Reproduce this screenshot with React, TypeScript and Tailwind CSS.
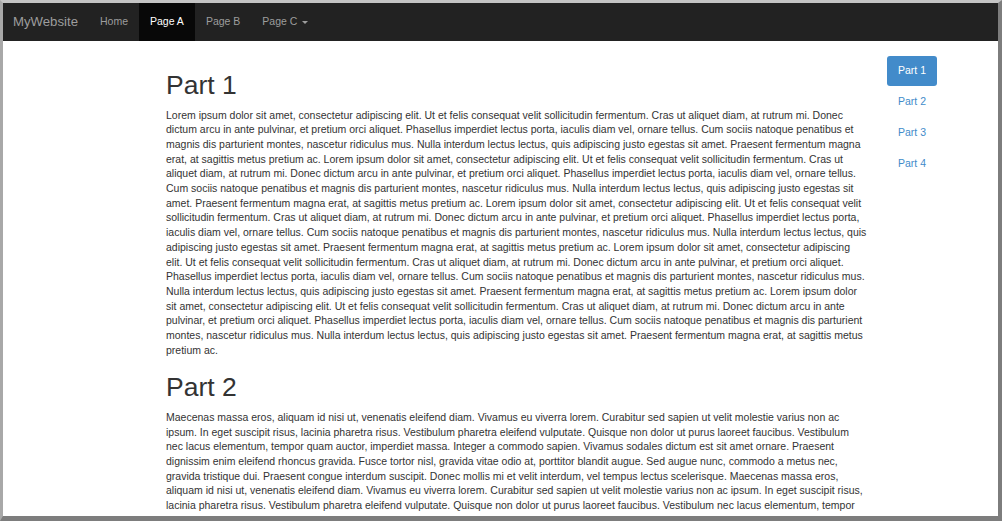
import React from "react";

const LOREM =
  "Lorem ipsum dolor sit amet, consectetur adipiscing elit. Ut et felis consequat velit sollicitudin fermentum. Cras ut aliquet diam, at rutrum mi. Donec dictum arcu in ante pulvinar, et pretium orci aliquet. Phasellus imperdiet lectus porta, iaculis diam vel, ornare tellus. Cum sociis natoque penatibus et magnis dis parturient montes, nascetur ridiculus mus. Nulla interdum lectus lectus, quis adipiscing justo egestas sit amet. Praesent fermentum magna erat, at sagittis metus pretium ac.";

const MAECENAS =
  "Maecenas massa eros, aliquam id nisi ut, venenatis eleifend diam. Vivamus eu viverra lorem. Curabitur sed sapien ut velit molestie varius non ac ipsum. In eget suscipit risus, lacinia pharetra risus. Vestibulum pharetra eleifend vulputate. Quisque non dolor ut purus laoreet faucibus. Vestibulum nec lacus elementum, tempor quam auctor, imperdiet massa. Integer a commodo sapien. Vivamus sodales dictum est sit amet ornare. Praesent dignissim enim eleifend rhoncus gravida. Fusce tortor nisl, gravida vitae odio at, porttitor blandit augue. Sed augue nunc, commodo a metus nec, gravida tristique dui. Praesent congue interdum suscipit. Donec mollis mi et velit interdum, vel tempus lectus scelerisque.";

const NAV = ["Home", "Page A", "Page B"];
const PARTS = ["Part 1", "Part 2", "Part 3", "Part 4"];

function Navbar() {
  return (
    <div className="h-[38px] shrink-0 bg-[#222222] flex items-stretch text-[10.5px]">
      <div className="pl-[10px] pr-[11px] flex items-center text-[13.2px] text-[#9d9d9d]">MyWebsite</div>
      {NAV.map((item) => (
        <div
          key={item}
          className={
            item === "Page A"
              ? "px-[11px] flex items-center bg-[#080808] text-white"
              : "px-[11px] flex items-center text-[#9d9d9d]"
          }
        >
          {item}
        </div>
      ))}
      <div className="px-[11px] flex items-center text-[#9d9d9d]">
        Page C
        <span className="ml-[5px] w-0 h-0 border-x-[3px] border-t-[3px] border-x-transparent border-t-[#9d9d9d]" />
      </div>
    </div>
  );
}

export default function App() {
  const part1 = Array(5).fill(LOREM).join(" ");
  const part2 = Array(3).fill(MAECENAS).join(" ");

  return (
    <div
      className="w-[1002px] h-[521px] overflow-hidden border-t-[3px] border-l-[3px] border-r-[4px] border-b-[5px] border-t-[#c4c4c4] border-l-[#a8a8a8] border-r-[#7d7d7d] border-b-[#7d7d7d] bg-white flex flex-col"
      style={{ fontFamily: '"Liberation Sans", Arial, sans-serif' }}
    >
      <Navbar />
      <div className="flex-1 overflow-hidden flex pl-[163px]">
        <div className="w-[702px] pt-[30px] text-[#333333]">
          <h1 className="text-[26.5px] leading-[29px] mb-[7.5px]">Part 1</h1>
          <p className="text-[10.5px] leading-[14.7px]">{part1}</p>
          <h1 className="text-[26.5px] leading-[29px] mt-[16px] mb-[7.5px]">Part 2</h1>
          <p className="text-[10.5px] leading-[14.7px]">{part2}</p>
        </div>
        <div className="ml-[19px] w-[50px] pt-[15px] flex flex-col gap-[1px] text-[10.5px]">
          {PARTS.map((p, i) => (
            <div
              key={p}
              className={
                i === 0
                  ? "h-[30px] flex items-center justify-center rounded-[3px] bg-[#428bca] text-white"
                  : "h-[30px] flex items-center justify-center text-[#428bca]"
              }
            >
              {p}
            </div>
          ))}
        </div>
      </div>
    </div>
  );
}
